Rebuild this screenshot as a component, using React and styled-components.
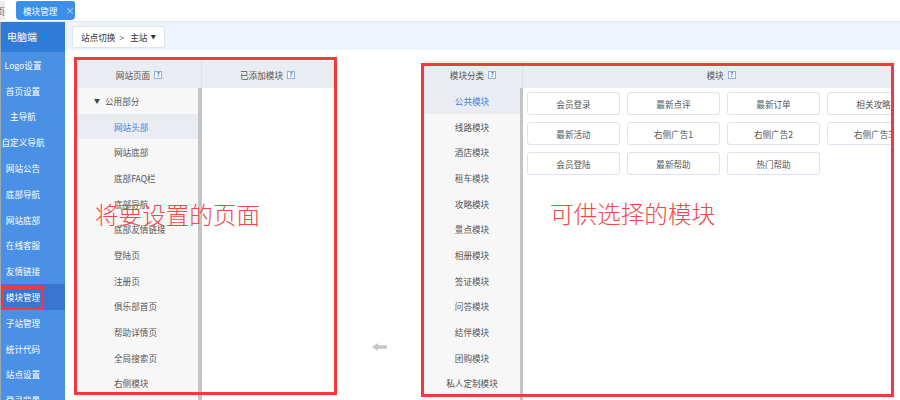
import React from 'react'
import styled, { createGlobalStyle } from 'styled-components'

const GlobalStyle = createGlobalStyle`
  html, body { margin: 0; padding: 0; background: #fff; }
  body {
    font-family: "Noto Sans CJK SC", "Noto Sans", "Liberation Sans", sans-serif;
    width: 900px;
    height: 400px;
    overflow: hidden;
  }
  * { box-sizing: border-box; }
`

const Page = styled.div`
    display: flex;
    flex-direction: column;
    width: 900px;
    height: 400px;
    overflow: hidden;
`;

const TopBar = styled.div`
    height: 22px;
    flex: none;
    display: flex;
    align-items: flex-start;
    padding-top: 1px;
    background: #fff;
    border-bottom: 1px solid #e4e8ee;
`;

const PrevTab = styled.div`
    width: 5px;
    height: 19px;
    display: flex;
    justify-content: flex-end;
    align-items: center;
    overflow: hidden;
    white-space: nowrap;
    background: #ececec;
    color: #666;
    font-size: 8.6px;
`;

const Tab = styled.div`
    margin-left: 11px;
    height: 19px;
    width: 59px;
    padding: 0 0 0 7px;
    display: flex;
    align-items: center;
    gap: 8px;
    background: #3d8ee6;
    color: #fff;
    font-size: 8.6px;
    border-radius: 2px 2px 4px 4px;

    span {
        color: #cfe1f8;
        font-size: 9px;
    }
`;

const Body = styled.div`
    flex: 1;
    display: flex;
    min-height: 0;
`;

const Sidebar = styled.nav`
    width: 65px;
    flex: none;
    display: flex;
    flex-direction: column;
    background: #4a90e4;
    border-left: 1px solid #9aa6b4;
    color: #fff;
`;

const SideHead = styled.div`
    height: 30px;
    flex: none;
    padding-left: 6px;
    line-height: 30px;
    font-size: 10px;
    background: #2f7bd7;
`;

const SideItem = styled.div`
    position: relative;
    height: 25.8px;
    flex: none;
    display: flex;
    align-items: center;
    font-size: 8.6px;
    white-space: nowrap;
    background: ${p => (p.$active ? '#3876d2' : 'transparent')};

    span {
        width: 44px;
        text-align: center;
    }
`;

const Main = styled.div`
    flex: 1;
    display: flex;
    flex-direction: column;
    min-width: 0;
`;

const Crumbs = styled.div`
    height: 28px;
    flex: none;
    padding: 4px 7px;
    background: #edf4fd;
`;

const Dropdown = styled.div`
    width: 93px;
    height: 22px;
    display: flex;
    align-items: center;
    padding: 0 8px 0 8px;
    background: #fff;
    border: 1px solid #dfe4ea;
    border-radius: 2px;
    color: #333;
    font-size: 8.6px;
    white-space: nowrap;

    em {
        font-style: normal;
        margin: 0 6px 0 4px;
        color: #666;
    }

    b {
        margin-left: auto;
        font-size: 5.5px;
        font-weight: normal;
        color: #333;
    }
`;

const Workspace = styled.div`
    flex: 1;
    display: flex;
    align-items: flex-start;
    padding: 11px 0 0 12px;
    overflow: hidden;
`;

const PanelWrap = styled.div`
    position: relative;
    flex: none;
    width: ${p => p.$w}px;
`;

const Panel = styled.div`
    height: 345px;
    display: grid;
    grid-template-columns: ${p => p.$cols};
    grid-template-rows: 27px 1fr;
    overflow: hidden;
    background: #fff;
`;

const HeadCell = styled.div`
    display: flex;
    align-items: center;
    justify-content: center;
    gap: 4px;
    background: #e9ecf0;
    color: #555;
    font-size: 8.6px;
    border-right: 1px solid #dde1e7;
    white-space: nowrap;
`;

const Help = styled.i`
    width: 8px;
    height: 8px;
    display: inline-flex;
    align-items: center;
    justify-content: center;
    border: 1px solid #8db2e8;
    background: #fff;
    color: #3c7ddb;
    font-style: normal;
    font-weight: bold;
    font-size: 6.5px;
    line-height: 1;
`;

const ListCol = styled.div`
    background: #f7f7f7;
    border-right: ${p => p.$bar}px solid #c3c4c6;
`;

const ListRow = styled.div`
    height: 25.7px;
    display: flex;
    align-items: center;
    justify-content: ${p => (p.$center ? 'center' : 'flex-start')};
    padding-left: ${p => p.$indent || 0}px;
    font-size: 8.6px;
    white-space: nowrap;
    color: ${p => (p.$active ? '#4a7fe0' : '#555')};
    background: ${p => (p.$active ? '#e9ecf0' : 'transparent')};

    small {
        font-size: 6px;
        margin-right: 5px;
        color: #444;
    }
`;

const EmptyCol = styled.div`
    background: #fff;
`;

const ModGrid = styled.div`
    display: grid;
    grid-template-columns: repeat(4, 93px);
    grid-auto-rows: 23px;
    gap: 7px;
    align-content: start;
    padding: 4px 0 0 4px;
`;

const ModButton = styled.div`
    display: flex;
    align-items: center;
    justify-content: center;
    background: #fff;
    border: 1px solid #dbe3ee;
    border-radius: 3px;
    color: #555;
    font-size: 8.6px;
    white-space: nowrap;
    overflow: hidden;
`;

const ArrowSlot = styled.div`
    width: 90px;
    flex: none;
    display: flex;
    justify-content: center;
    padding-top: 282px;
`;

/* red annotation marks drawn over the screenshot */
const RedFrame = styled.div`
    position: absolute;
    top: ${p => p.$top}px;
    left: ${p => p.$left}px;
    width: ${p => p.$w}px;
    height: ${p => p.$h}px;
    border: 3px solid #f23a3c;
    pointer-events: none;
`;

const Note = styled.div`
    position: absolute;
    top: ${p => p.$top}px;
    left: ${p => p.$left}px;
    color: #f4474a;
    font-size: 23.6px;
    line-height: 24px;
    font-weight: 300;
    white-space: nowrap;
    pointer-events: none;
`;

const sideItems = ['Logo设置', '首页设置', '主导航', '自定义导航', '网站公告', '底部导航', '网站底部', '在线客服', '友情链接', '模块管理', '子站管理', '统计代码', '站点设置', '登录背景']

const pages = ['网站头部', '网站底部', '底部FAQ栏', '底部导航', '底部友情链接', '登陆页', '注册页', '俱乐部首页', '帮助详情页', '全局搜索页', '右侧模块', '其他页面']

const categories = ['公共模块', '线路模块', '酒店模块', '租车模块', '攻略模块', '景点模块', '相册模块', '签证模块', '问答模块', '结伴模块', '团购模块', '私人定制模块', '其他模块']

const modules = ['会员登录', '最新点评', '最新订单', '相关攻略', '最新活动', '右侧广告1', '右侧广告2', '右侧广告3', '会员登陆', '最新帮助', '热门帮助']

function BackArrow() {
    return (
        <svg width="15" height="8" viewBox="0 0 15 8">
            <path d="M0 4 L6 0 L6 2.2 L15 2.2 L15 5.8 L6 5.8 L6 8 Z" fill="#c6c6c6" />
        </svg>
    )
}

export default function App() {
    return (
        <Page>
            <GlobalStyle />
            <TopBar>
                <PrevTab>首页</PrevTab>
                <Tab>模块管理<span>×</span></Tab>
            </TopBar>
            <Body>
                <Sidebar>
                    <SideHead>电脑端</SideHead>
                    {sideItems.map(item => (
                        <SideItem key={item} $active={item === '模块管理'}>
                            <span>{item}</span>
                            {item === '模块管理' && <RedFrame $top={2} $left={0} $w={43} $h={24} />}
                        </SideItem>
                    ))}
                </Sidebar>
                <Main>
                    <Crumbs>
                        <Dropdown>站点切换<em>&gt;</em>主站<b>▼</b></Dropdown>
                    </Crumbs>
                    <Workspace>
                        <PanelWrap $w={257}>
                            <Panel $cols="125px 1fr">
                                <HeadCell>网站页面<Help>?</Help></HeadCell>
                                <HeadCell>已添加模块<Help>?</Help></HeadCell>
                                <ListCol $bar={4}>
                                    <ListRow $indent={17}><small>▼</small>公用部分</ListRow>
                                    {pages.map((p, i) => (
                                        <ListRow key={p} $indent={37} $active={i === 0}>{p}</ListRow>
                                    ))}
                                </ListCol>
                                <EmptyCol />
                            </Panel>
                            <RedFrame $top={-4} $left={-3} $w={263} $h={338} />
                            <Note $top={141} $left={18}>将要设置的页面</Note>
                        </PanelWrap>
                        <ArrowSlot>
                            <BackArrow />
                        </ArrowSlot>
                        <PanelWrap $w={470}>
                            <Panel $cols="99px 1fr">
                                <HeadCell>模块分类<Help>?</Help></HeadCell>
                                <HeadCell>模块<Help>?</Help></HeadCell>
                                <ListCol $bar={3}>
                                    {categories.map((c, i) => (
                                        <ListRow key={c} $center $active={i === 0}>{c}</ListRow>
                                    ))}
                                </ListCol>
                                <ModGrid>
                                    {modules.map(m => (
                                        <ModButton key={m}>{m}</ModButton>
                                    ))}
                                </ModGrid>
                            </Panel>
                            <RedFrame $top={2} $left={-3} $w={473} $h={334} />
                            <Note $top={140} $left={126}>可供选择的模块</Note>
                        </PanelWrap>
                    </Workspace>
                </Main>
            </Body>
        </Page>
    )
}
